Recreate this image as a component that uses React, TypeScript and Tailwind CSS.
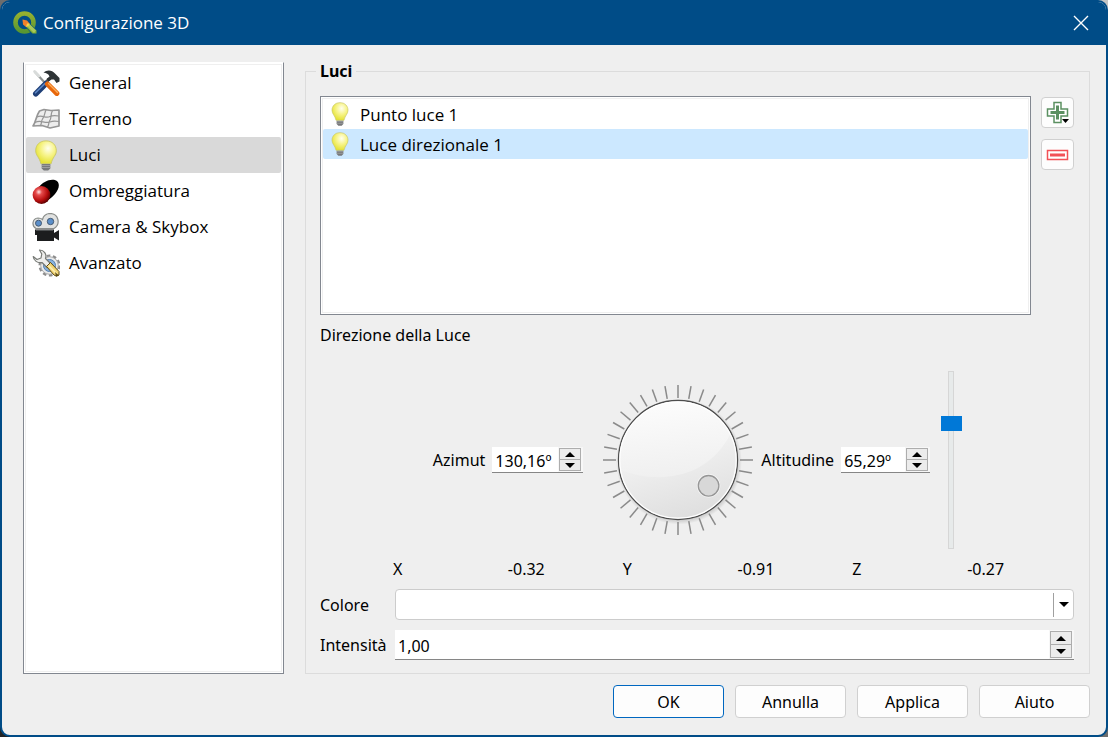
import clsx from "clsx";
import { ReactNode, useState } from "react";

function QgisLogo() {
    return (
        <svg viewBox="0 0 24 24" className="size-6" aria-hidden="true">
            <defs>
                <linearGradient id="q-ring" x1="0" y1="0" x2="0" y2="1">
                    <stop offset="0" stopColor="#94b030" />
                    <stop offset="1" stopColor="#589632" />
                </linearGradient>
            </defs>
            <circle cx="11.5" cy="11.500" r="9" fill="none" stroke="url(#q-ring)" strokeWidth="4.6" />
            <path d="M12 11.5L15 10.5L24 19.5V23H19L12.5 16Z" fill="#004c87" />
            <path d="M13.5 13.5L16 12.5L23.5 19.5V22.5H19.5L13 15.8Z" fill="#7fae35" />
            <path d="M16 12.5L23 19.5L21 22L13.5 14.5Z" fill="#a9c95a" />
            <path d="M9.5 8.5L14 9.5L16.5 12.5L13 16L10 13.5Z" fill="#f0802b" />
            <path d="M14 12.5L16.5 12.5L15.5 15L13 16Z" fill="#f6d04a" />
        </svg>
    );
}

function Bulb({ className }: { className: string }) {
    return (
        <svg viewBox="0 0 28 36" className={className} aria-hidden="true">
            <defs>
                <radialGradient id="bulb-glass" cx="0.6" cy="0.33" r="0.65">
                    <stop offset="0" stopColor="#ffffee" />
                    <stop offset="0.5" stopColor="#f7f48a" />
                    <stop offset="1" stopColor="#e6e338" />
                </radialGradient>
            </defs>
            <path d="M14 1C6.500 1 2 6 2 12.500C2 18 6.500 20 8 27.500H20C21.500 20 26 18 26 12.500C26 6 21.500 1 14 1Z" fill="url(#bulb-glass)" stroke="#c9c768" strokeWidth="1" />
            <path d="M9 28H19V33L16.500 35.500H11.500L9 33Z" fill="#77787a" />
            <path d="M9 29.500H19M9 32H19" stroke="#a6a7a9" strokeWidth="1" />
        </svg>
    );
}

function ToolsIcon() {
    return (
        <svg viewBox="0 0 28 28" className="size-7" aria-hidden="true">
            <path d="M3 3L14 15" stroke="#8e9291" strokeWidth="2.200" strokeLinecap="round" />
            <path d="M2.500 2.500L7 7" stroke="#d8dbda" strokeWidth="2.600" strokeLinecap="round" />
            <path d="M17 10L13.500 14" stroke="#555957" strokeWidth="3.200" />
            <path d="M11.500 3.500C15 0.500 20 0.800 23 4.500L27.500 9V12.500L24.500 14L22 10.500H19.500L16.500 12.500L14.500 10L17.500 7.500C16.500 4.800 14.500 4 11.500 3.500Z" fill="#2e3436" />
            <path d="M14 14.500L3.800 24.800" stroke="#1f3f77" strokeWidth="5.600" strokeLinecap="round" />
            <path d="M13 14.500L3.500 23.800" stroke="#5c86c4" strokeWidth="1.600" strokeLinecap="round" />
            <path d="M15.500 15L24.800 24.300" stroke="#e8670c" strokeWidth="5.200" strokeLinecap="round" />
            <path d="M16.500 14.500L25.500 23.500" stroke="#fcaf5a" strokeWidth="1.400" strokeLinecap="round" />
        </svg>
    );
}

function TerrainIcon() {
    return (
        <svg viewBox="0 0 28 28" className="size-7" fill="#ededed" stroke="#969696" strokeLinejoin="round" aria-hidden="true">
            <path d="M7.500 6L12 4.500L19 5.500L27 5V21L18 23L10 20.500L1 21C4 17 4 11 7.500 6Z" strokeWidth="1.700" />
            <path d="M5 12C10 9 13 14 18 11.500C21 10 24 10.500 27 11M3 17.500C9 14 12 19 18 17C21 15.500 24 16 27 16.500M14 5C12 9 13 11 10.500 14C9 16 10 18 8.500 20.500M20.500 5.500C18 10 20 13 17.500 16C16.500 18 17 20 15.500 22" fill="none" strokeWidth="1.200" />
        </svg>
    );
}

function ShadingIcon() {
    return (
        <svg viewBox="0 0 28 28" className="size-7" aria-hidden="true">
            <defs>
                <radialGradient id="ball" cx="0.35" cy="0.33" r="0.7">
                    <stop offset="0" stopColor="#ffe6e6" />
                    <stop offset="0.250" stopColor="#e54b4b" />
                    <stop offset="0.700" stopColor="#b60d0d" />
                    <stop offset="1" stopColor="#5c0000" />
                </radialGradient>
            </defs>
            <path d="M6 11C11 4.500 18 1.500 23.500 3.200C28.500 5 27.500 12 23 17C19.500 21 16 23.500 12 25Z" fill="#000" />
            <circle cx="9.500" cy="18" r="8.900" fill="url(#ball)" />
        </svg>
    );
}

function CameraIcon() {
    return (
        <svg viewBox="0 0 28 28" className="size-7" aria-hidden="true">
            <path d="M4 15.500C-0.500 13 0 5.500 6 5C8 5 9.500 5.500 10.500 6.500C11.500 2.500 14.500 0.500 18.500 0.500C26.500 1 29 11 22 15.500Z" fill="#e1e2e1" stroke="#8b8e8b" strokeWidth="1.200" />
            <circle cx="6.500" cy="10.200" r="3" fill="#5b8fca" stroke="#455a72" />
            <circle cx="18.500" cy="8.500" r="3.200" fill="#5b8fca" stroke="#455a72" />
            <path d="M3 16.500H22V20L27 17V27.500L22 24.500V28H5V22H3Z" fill="#1c1d1e" />
            <path d="M4 17.500H21" stroke="#4c4f50" strokeWidth="1" />
        </svg>
    );
}

function AdvancedIcon() {
    return (
        <svg viewBox="0 0 28 28" className="size-7" aria-hidden="true">
            <circle cx="17.500" cy="16.500" r="9.500" fill="none" stroke="#8d8d8d" strokeWidth="3" strokeDasharray="3.500 2.468" />
            <circle cx="17.500" cy="16.500" r="8.800" fill="#e9eaea" stroke="#a9a9a9" strokeWidth="1" />
            <circle cx="17.500" cy="16.500" r="6" fill="#88b2dd" stroke="#567fae" strokeWidth="1" />
            <path d="M7.500 1C12 1 15 5 13.500 9.500L18.500 14.500L15 18.500L10 13.500C5.500 14.500 1.500 11.500 1.200 7.500L5 10.500L9 9L9.800 5Z" fill="#eeeeec" stroke="#777a76" strokeWidth="1.200" strokeLinejoin="round" />
            <path d="M14.500 17.500L18.500 13.500L27 22.500V26L24.500 27.200L22 26Z" fill="#f3d675" stroke="#5d4b14" strokeWidth="1" strokeLinejoin="round" />
            <path d="M16.500 16.500L25 25" stroke="#fdf0b8" strokeWidth="1.500" />
            <path d="M23 23L27 26.500L24 27.500Z" fill="#5d4b14" />
        </svg>
    );
}

const pages: { name: string; icon: ReactNode }[] = [
    { name: "General", icon: <ToolsIcon /> },
    { name: "Terreno", icon: <TerrainIcon /> },
    { name: "Luci", icon: <Bulb className="h-[31px] w-7" /> },
    { name: "Ombreggiatura", icon: <ShadingIcon /> },
    { name: "Camera & Skybox", icon: <CameraIcon /> },
    { name: "Avanzato", icon: <AdvancedIcon /> },
];

const lights = ["Punto luce 1", "Luce direzionale 1"];

const direction = [
    { axis: "X", value: "-0.32" },
    { axis: "Y", value: "-0.91" },
    { axis: "Z", value: "-0.27" },
];

function Arrow({ up }: { up?: boolean }) {
    return (
        <svg viewBox="0 0 10 5" className="h-[5px] w-[10px]" aria-hidden="true">
            <path d={up ? "M5 0L10 5H0Z" : "M0 0H10L5 5Z"} fill="#000" />
        </svg>
    );
}

function SpinBox({ id, value, className }: { id: string; value: string; className: string }) {
    return (
        <div className={clsx("flex border-b border-[#868686] bg-[#f7f7f7]", className)}>
            <input id={id} type="text" defaultValue={value} className="w-0 flex-1 bg-white pt-0.5 pl-[3px] text-base outline-none" />
            <div className="my-px mr-0.5 ml-px flex w-[22px] flex-col border border-[#adadad] bg-[#ececec]">
                <button type="button" aria-label="Aumenta" className="grid flex-1 place-items-center border-b border-[#adadad]"><Arrow up /></button>
                <button type="button" aria-label="Diminuisci" className="grid flex-1 place-items-center"><Arrow /></button>
            </div>
        </div>
    );
}

function Dial({ angle }: { angle: number }) {
    const ticks = Array.from({ length: 36 }, (_, i) => i * 10);
    const rad = (angle * Math.PI) / 180;
    return (
        <svg
            viewBox="0 0 152 152"
            className="mr-[7px] ml-[19px] size-[152px] shrink-0"
            role="slider"
            aria-label="Azimut"
            aria-valuenow={angle}
            aria-valuemin={0}
            aria-valuemax={360}
        >
            <defs>
                <linearGradient id="dial-face" x1="0.3" y1="0" x2="0.6" y2="1">
                    <stop offset="0" stopColor="#ffffff" />
                    <stop offset="1" stopColor="#dedede" />
                </linearGradient>
                <linearGradient id="dial-gloss" x1="0.4" y1="0" x2="0.6" y2="1">
                    <stop offset="0" stopColor="#ffffff" />
                    <stop offset="1" stopColor="#efefef" />
                </linearGradient>
                <radialGradient id="dial-shadow">
                    <stop offset="0.9" stopColor="#000" stopOpacity="0.2" />
                    <stop offset="1" stopColor="#000" stopOpacity="0" />
                </radialGradient>
                <clipPath id="dial-clip"><circle cx="76" cy="76" r="58" /></clipPath>
            </defs>
            <circle cx="77" cy="77.500" r="63" fill="url(#dial-shadow)" />
            {ticks.map((deg) => (
                <path key={deg} d="M76 1V14" transform={`rotate(${deg} 76 76)`} stroke="#8a8a8a" strokeWidth="1.500" />
            ))}
            <circle cx="76" cy="76" r="59.500" fill="url(#dial-face)" stroke="#4d4d4d" strokeWidth="1.300" />
            <path d="M0 0H152L134 36C128 56 114 75 94 85C70 96 42 96 14 84Z" fill="url(#dial-gloss)" clipPath="url(#dial-clip)" />
            <circle cx="76" cy="76" r="58.200" fill="none" stroke="#fff" strokeWidth="1.200" />
            <circle cx={76 + 40 * Math.sin(rad)} cy={76 - 40 * Math.cos(rad)} r="11.700" fill="#f8f8f8" />
            <circle cx={76 + 40 * Math.sin(rad)} cy={76 - 40 * Math.cos(rad)} r="10.300" fill="#d8d8d8" stroke="#969696" strokeWidth="1.300" />
        </svg>
    );
}

function DialogButton({ children, primary }: { children: ReactNode; primary?: boolean }) {
    return (
        <button type="button" className={clsx("h-[33px] w-[111px] rounded border bg-[#fdfdfd]", primary ? "border-[#0067c0]" : "border-[#d0d0d0]")}>
            {children}
        </button>
    );
}

export default function App() {
    const [page, setPage] = useState("Luci");
    const [light, setLight] = useState("Luce direzionale 1");
    const [altitude, setAltitude] = useState(65.29);

    return (
        <div className="flex min-h-screen flex-col bg-linear-to-tr from-[#222222] to-[#c4c4c4] font-['Noto_Sans','Open_Sans',sans-serif] text-base leading-5 text-black">
            <div className="flex flex-1 flex-col overflow-hidden rounded-[10px] border-2 border-[#004c87] bg-[#efefef]">
                <header className="flex h-[43px] shrink-0 items-center bg-[#004c87] pr-[17px] pb-0.5 pl-[11px] text-white">
                    <QgisLogo />
                    <h1 className="ml-[6px] flex-1 font-['Open_Sans','Noto_Sans',sans-serif] text-[17px]">Configurazione 3D</h1>
                    <button type="button" aria-label="Chiudi">
                        <svg viewBox="0 0 16 16" className="size-4" stroke="#fff" strokeWidth="1.400" aria-hidden="true">
                            <path d="M1 1L15 15M15 1L1 15" />
                        </svg>
                    </button>
                </header>

                <main className="flex flex-1 flex-col pt-[17px] pr-4 pb-[17px] pl-[21px]">
                    <div className="flex flex-1 gap-[21px]">
                        <nav className="flex w-[261px] shrink-0 border border-t-white border-[#828790] bg-white p-px">
                            <ul className="flex-1 border border-[#efefef] font-['Open_Sans','Noto_Sans',sans-serif] text-[17px]">
                                {pages.map(({ name, icon }) => (
                                    <li key={name}>
                                        <button
                                            type="button"
                                            onClick={() => setPage(name)}
                                            className={clsx("flex h-9 w-full items-center gap-[9px] rounded-xs pl-1.5 text-left", page === name && "bg-[#d9d9d9]")}
                                        >
                                            {icon}
                                            {name}
                                        </button>
                                    </li>
                                ))}
                            </ul>
                        </nav>

                        <fieldset className="flex min-w-0 flex-1 flex-col border border-[#dcdcdc] pt-4 pr-[15px] pb-[13px] pl-[14px]">
                            <legend className="-ml-1 px-1 text-base leading-[18px] font-bold">Luci</legend>
                            <div className="flex min-h-[219px] flex-1 gap-[10px]">
                                <div className="flex flex-1 border border-[#828790] bg-white p-px">
                                    <ul className="flex-1 border border-[#efefef] font-['Open_Sans','Noto_Sans',sans-serif] text-[17px]">
                                        {lights.map((name) => (
                                            <li key={name}>
                                                <button
                                                    type="button"
                                                    onClick={() => setLight(name)}
                                                    className={clsx("flex h-[30px] w-full items-center gap-2 rounded-xs pl-[5px] text-left", light === name && "bg-[#cce8ff]")}
                                                >
                                                    <Bulb className="size-6" />
                                                    <span className="pt-0.5">{name}</span>
                                                </button>
                                            </li>
                                        ))}
                                    </ul>
                                </div>
                                <div className="flex flex-col gap-[11px] pt-px">
                                    <button type="button" aria-label="Aggiungi luce" className="grid h-[31px] w-[33px] place-items-center rounded border border-[#d0d0d0] bg-[#fdfdfd]">
                                        <svg viewBox="0 0 24 24" className="size-6" fill="none" aria-hidden="true">
                                            <path d="M8 1.500H15V8H21.500V15H15V21.500H8V15H1.500V8H8Z" fill="#fff" stroke="#5b9061" strokeWidth="1.500" />
                                            <path d="M11.500 4.500V18.500M4.500 11.500H18.500" stroke="#5b9061" strokeWidth="3" />
                                            <path d="M16 18H23L19.500 22Z" fill="#000" />
                                        </svg>
                                    </button>
                                    <button type="button" aria-label="Rimuovi luce" className="grid h-[31px] w-[33px] place-items-center rounded border border-[#d0d0d0] bg-[#fdfdfd]">
                                        <svg viewBox="0 0 24 24" className="size-6" fill="none" aria-hidden="true">
                                            <path d="M1.500 7.500H21.500V16.500H1.500Z" fill="#fff" stroke="#f25056" strokeWidth="1.500" />
                                            <path d="M4 12H19" stroke="#f25056" strokeWidth="3.200" />
                                        </svg>
                                    </button>
                                </div>
                            </div>

                            <p className="mt-[10px]">Direzione della Luce</p>

                            <div className="mt-[26px] flex h-[178px] items-center justify-center gap-[10px]">
                                <div className="flex items-center">
                                    <label htmlFor="azimuth" className="mr-[7px]">Azimut</label>
                                    <SpinBox id="azimuth" value="130,16º" className="h-[26px] w-[91px]" />
                                    <Dial angle={130.16} />
                                    <label htmlFor="altitude" className="mr-[7px]">Altitudine</label>
                                    <SpinBox id="altitude" value="65,29º" className="h-[26px] w-[89px]" />
                                </div>
                                <input
                                    type="range"
                                    aria-label="Altitudine"
                                    min={0}
                                    max={90}
                                    step={0.01}
                                    value={altitude}
                                    onChange={(e) => setAltitude(Number(e.target.value))}
                                    className="h-[178px] w-[21px] appearance-none bg-transparent [direction:rtl] [writing-mode:vertical-lr] [&::-webkit-slider-runnable-track]:w-[6px] [&::-webkit-slider-runnable-track]:border [&::-webkit-slider-runnable-track]:border-[#d6d6d6] [&::-webkit-slider-runnable-track]:bg-[#e7eaea] [&::-webkit-slider-thumb]:-ml-[8px] [&::-webkit-slider-thumb]:h-[15px] [&::-webkit-slider-thumb]:w-[21px] [&::-webkit-slider-thumb]:appearance-none [&::-webkit-slider-thumb]:bg-[#0078d7]"
                                />
                            </div>

                            <dl className="mt-[10px] ml-[73px] grid grid-cols-3 gap-2">
                                {direction.map(({ axis, value }) => (
                                    <div key={axis} className="grid grid-cols-2 gap-2">
                                        <dt>{axis}</dt>
                                        <dd>{value}</dd>
                                    </div>
                                ))}
                            </dl>

                            <div className="mt-[10px] grid grid-cols-[75px_1fr] items-center gap-y-[10px]">
                                <label htmlFor="color">Colore</label>
                                <div className="flex h-[31px] items-center rounded border border-[#cccccc] bg-white">
                                    <button id="color" type="button" className="h-full flex-1 rounded-l" />
                                    <button type="button" aria-label="Menu colore" className="grid h-6 w-5 place-items-center border-l border-[#a0a0a0]"><Arrow /></button>
                                </div>
                                <label htmlFor="intensity">Intensità</label>
                                <SpinBox id="intensity" value="1,00" className="h-[30px]" />
                            </div>
                        </fieldset>
                    </div>

                    <footer className="mt-[11px] flex justify-end gap-[11px]">
                        <DialogButton primary>OK</DialogButton>
                        <DialogButton>Annulla</DialogButton>
                        <DialogButton>Applica</DialogButton>
                        <DialogButton>Aiuto</DialogButton>
                    </footer>
                </main>
            </div>
        </div>
    );
}
